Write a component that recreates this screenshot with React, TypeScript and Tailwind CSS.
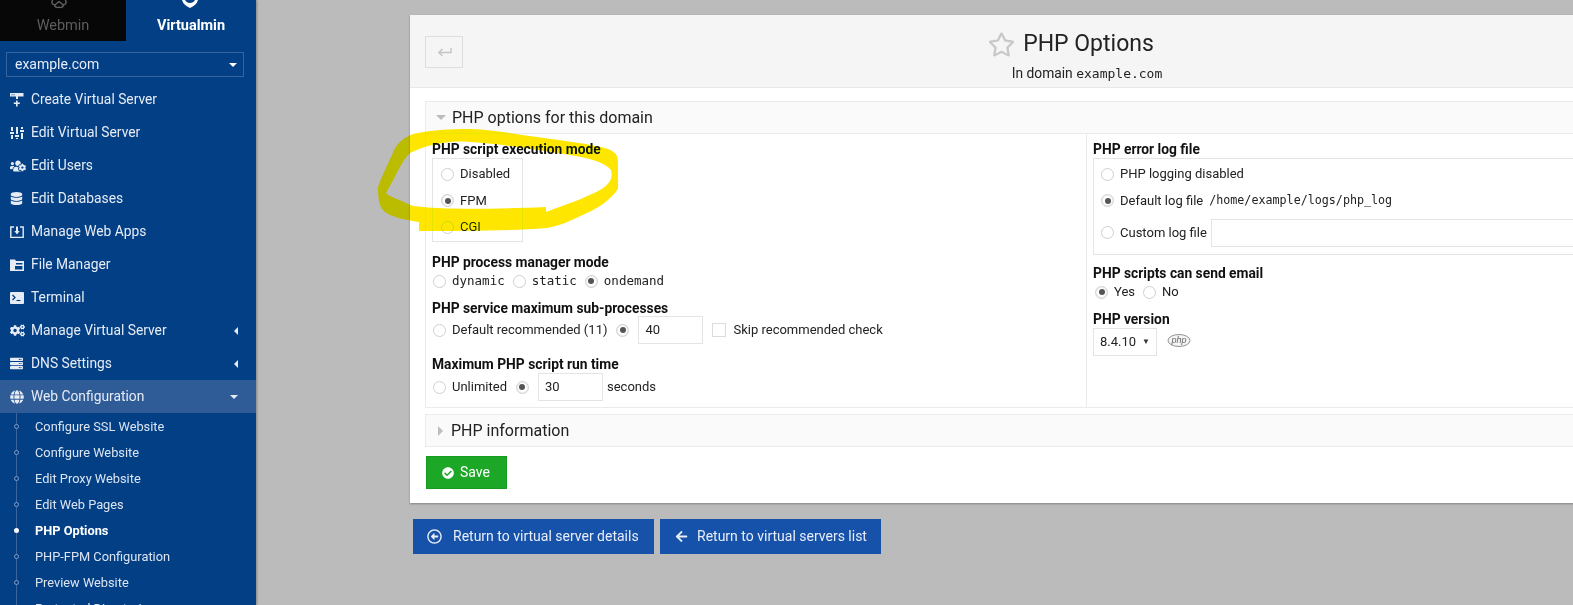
import { ReactNode } from 'react';
import {
  FaArrowLeft,
  FaCheckCircle,
  FaCogs,
  FaDatabase,
  FaGlobe,
  FaRegArrowAltCircleLeft,
  FaRegStar,
  FaServer,
  FaUsersCog,
} from 'react-icons/fa';

const mono = 'font-["DejaVu_Sans_Mono",monospace]';

function Sliders() {
  return (
    <svg viewBox="0 0 14 14" className="w-[14px] h-[14px]" fill="currentColor">
      <rect x="1" y="1" width="2" height="4" />
      <rect x="0" y="6" width="4" height="2" />
      <rect x="1" y="9" width="2" height="4" />
      <rect x="6" y="1" width="2" height="7" />
      <rect x="5" y="9" width="4" height="2" />
      <rect x="6" y="12" width="2" height="1" />
      <rect x="11" y="1" width="2" height="2" />
      <rect x="10" y="4" width="4" height="2" />
      <rect x="11" y="7" width="2" height="6" />
    </svg>
  );
}

function NewServer() {
  return (
    <svg viewBox="0 0 14 14" className="w-[14px] h-[14px]" fill="currentColor">
      <path
        fillRule="evenodd"
        d="M0 0h13.5v3.5H0zM1.5 1.2v1h1v-1zM3.5 1.2v1h1v-1zM6 3.5h2V6H6zM6 7.5h1.6v2h2.2V11H7.6v2.4H6V11H3.8V9.5H6z"
      />
    </svg>
  );
}

function BoxDown() {
  return (
    <svg viewBox="0 0 14 14" className="w-[14px] h-[14px]" fill="none" stroke="currentColor" strokeWidth="1.4">
      <path d="M4 2H.8v10.4h12.4V2H10" />
      <path d="M7 1.5v5" strokeWidth="2" />
      <path d="M4.4 6h5.2L7 9.5z" fill="currentColor" stroke="none" />
    </svg>
  );
}

function Folder() {
  return (
    <svg viewBox="0 0 14 14" className="w-[14px] h-[14px]" fill="currentColor">
      <path
        fillRule="evenodd"
        d="M0 1.5h5l1 1.5H14v10H0zM6 5v1.6h6.4V5zM5 8v3.6h7.4V8z"
      />
    </svg>
  );
}

function Term() {
  return (
    <svg viewBox="0 0 14 12" className="w-[14px] h-[12px]">
      <rect width="14" height="12" rx="1" fill="currentColor" />
      <path d="M2.5 3l2.5 2.5L2.5 8" fill="none" stroke="#033f85" strokeWidth="1.3" />
      <path d="M6.5 8.5h4" fill="none" stroke="#033f85" strokeWidth="1.1" />
    </svg>
  );
}

function BackArrow() {
  return (
    <svg viewBox="0 0 15 10" className="w-[15px] h-[10px]" fill="none" stroke="currentColor" strokeWidth="1.4">
      <path d="M14 1v4.5H2" />
      <path d="M5.5 2L1.8 5.5 5.5 9" />
    </svg>
  );
}

function MenuItem({ icon, label, arrow, active }: { icon: ReactNode; label: string; arrow?: 'left' | 'down'; active?: boolean }) {
  return (
    <div className={`h-[33px] flex items-center pl-[10px] pr-[18px] text-[13.8px] text-[#e6ecf5] ${active ? 'bg-[#2f5b97]' : ''}`}>
      <span className="w-[21px] flex justify-start">{icon}</span>
      <span className="flex-1">{label}</span>
      {arrow === 'left' && <span className="border-y-[4px] border-y-transparent border-r-[4px] border-r-[#e6ecf5]" />}
      {arrow === 'down' && <span className="border-x-[4px] border-x-transparent border-t-[4px] border-t-[#e6ecf5]" />}
    </div>
  );
}

function SubItem({ label, current }: { label: string; current?: boolean }) {
  return (
    <div className="relative h-[26px] flex items-center pl-[35px] text-[12.8px] text-[#dbe4f0]">
      {current ? (
        <span className="absolute left-[14px] top-[10px] w-[5px] h-[5px] rounded-full bg-white" />
      ) : (
        <span className="absolute left-[14px] top-[10px] w-[5px] h-[5px] rounded-full border border-[#7f9cc4] bg-[#033f85]" />
      )}
      <span className={current ? 'font-bold text-white' : ''}>{label}</span>
    </div>
  );
}

function Radio({ checked }: { checked?: boolean }) {
  return (
    <span className={`shrink-0 w-[13px] h-[13px] rounded-full border border-[#cfcfcf] flex items-center justify-center bg-white ${checked ? 'shadow-[inset_0_0_0_1px_#eee]' : ''}`}>
      {checked && <span className="w-[6px] h-[6px] rounded-full bg-[#555]" />}
    </span>
  );
}

function Label({ children }: { children: ReactNode }) {
  return <div className="font-bold text-[13.8px] leading-[16px] text-[#111]">{children}</div>;
}

function Field({ value, className }: { value?: string; className: string }) {
  return <div className={`h-[28px] border border-[#e4e4e4] flex items-center px-[6px] text-[13px] text-[#222] ${className}`}>{value}</div>;
}

function Marker() {
  return (
    <svg className="absolute left-0 top-0 pointer-events-none mix-blend-darken" width="1573" height="605">
      <path
        fill="#ffe600"
        fillRule="evenodd"
        d="M413 134C430 130 450 129 470 129C495 130 515 134 537 137C565 141 590 144 605 148C615 151 618 155 618 162L618 189C610 200 600 207 587 213C572 220 560 226 547 228C510 231 465 231 419 231L419 222C405 220 392 217 385 212C379 207 378 200 378 187C382 175 390 160 394 150C398 142 405 137 413 134ZM410 153C402 160 395 178 386 193C390 197 400 200 413 206C440 209 470 210 546 207L546 212C565 205 585 198 600 190C610 184 613 178 611 170C606 163 590 158 570 155C540 150 510 145 470 142C445 140 425 146 410 153Z"
      />
    </svg>
  );
}

export default function App() {
  return (
    <div className='relative w-[1573px] h-[605px] overflow-hidden flex bg-[#bbbbbb] font-["Roboto",sans-serif]'>
      <aside className="w-[256px] shrink-0 bg-[#033f85] shadow-[1px_0_2px_rgba(0,0,0,0.3)] overflow-hidden">
        <div className="flex h-[41px] text-[14.5px]">
          <div className="relative w-[126px] bg-[#070707] text-[#5e5e5e] flex justify-center items-end pb-[4px]">
            Webmin
            <svg viewBox="0 0 20 10" className="absolute left-[50px] top-0 w-[18px] h-[9px]" fill="none" stroke="#5e5e5e" strokeWidth="1.6">
              <path d="M3 0C1 3 3 6 6 5c2-1 3-3 4-3s2 2 4 3c3 1 5-2 3-5" />
              <path d="M5 5c0 3 3 4 5 3 2 1 5 0 5-3" />
            </svg>
          </div>
          <div className="relative flex-1 text-white font-bold flex justify-center items-end pb-[4px]">
            Virtualmin
            <svg viewBox="0 0 16 8" className="absolute left-[56px] top-0 w-[16px] h-[8px]" fill="#fff">
              <path d="M0 0h3c1 2 3 3 5 3s4-1 5-3h3c-1 4-4 6-8 8C4 6 1 4 0 0z" />
            </svg>
          </div>
        </div>
        <div className="ml-[6px] w-[238px] mt-[11px] h-[25px] border border-[#34639e] flex items-center justify-between pl-[8px] pr-[6px] text-[14px] text-[#e6ecf5]">
          example.com
          <span className="border-x-[4px] border-x-transparent border-t-[4px] border-t-white" />
        </div>
        <div className="mt-[6px]">
          <MenuItem icon={<NewServer />} label="Create Virtual Server" />
          <MenuItem icon={<Sliders />} label="Edit Virtual Server" />
          <MenuItem icon={<FaUsersCog size={16} />} label="Edit Users" />
          <MenuItem icon={<FaDatabase size={13} />} label="Edit Databases" />
          <MenuItem icon={<BoxDown />} label="Manage Web Apps" />
          <MenuItem icon={<Folder />} label="File Manager" />
          <MenuItem icon={<Term />} label="Terminal" />
          <MenuItem icon={<FaCogs size={15} />} label="Manage Virtual Server" arrow="left" />
          <MenuItem icon={<FaServer size={13} />} label="DNS Settings" arrow="left" />
          <MenuItem icon={<FaGlobe size={14} />} label="Web Configuration" arrow="down" active />
        </div>
        <div className="relative pt-[1px]">
          <span className="absolute left-[16px] top-0 bottom-0 w-px bg-[#3c659e]" />
          <SubItem label="Configure SSL Website" />
          <SubItem label="Configure Website" />
          <SubItem label="Edit Proxy Website" />
          <SubItem label="Edit Web Pages" />
          <SubItem label="PHP Options" current />
          <SubItem label="PHP-FPM Configuration" />
          <SubItem label="Preview Website" />
          <SubItem label="Protected Directories" />
        </div>
      </aside>

      <main className="pl-[154px] pt-[15px]">
        <section className="w-[1200px] bg-white shadow-[0_1px_2px_rgba(0,0,0,0.3)] pb-[14px]">
          <header className="relative h-[73px] bg-[#f5f5f5] border-b border-[#e8e8e8] flex flex-col items-center pt-[14px] pl-[154px]">
            <button className="absolute left-[15px] top-[21px] w-[38px] h-[32px] border border-[#dedede] flex items-center justify-center text-[#c4c4c4]">
              <BackArrow />
            </button>
            <div className="flex items-center gap-[8px] text-[23px] leading-[30px] text-[#222] -ml-[32px]">
              <FaRegStar size={27} className="text-[#c8c8c8]" />
              PHP Options
            </div>
            <div className="text-[13.8px] leading-[18px] mt-[5px] text-[#222]">
              In domain <span className={`${mono} text-[13px]`}>example.com</span>
            </div>
          </header>

          <div className="pl-[15px]">
            <div className="mt-[13px] h-[33px] bg-[#fafafa] border border-[#ebebeb] flex items-center pl-[10px] gap-[6px] text-[16px] text-[#222]">
              <span className="border-x-[5px] border-x-transparent border-t-[5px] border-t-[#bdbdbd]" />
              PHP options for this domain
            </div>
            <div className="flex h-[274px] border-x border-b border-[#ebebeb]">
              <div className="w-[661px] border-r border-[#ebebeb] pl-[6px] pt-[7px]">
                <Label>PHP script execution mode</Label>
                <div className="mt-[1px] w-[91px] h-[84px] border border-[#e4e4e4] pl-[8px] pt-[2px] text-[13px] text-[#222]">
                  <div className="h-[26px] flex items-center gap-[6px]"><Radio />Disabled</div>
                  <div className="h-[27px] flex items-center gap-[6px]"><Radio checked />FPM</div>
                  <div className="h-[26px] flex items-center gap-[6px]"><Radio />CGI</div>
                </div>
                <div className="mt-[12px]"><Label>PHP process manager mode</Label></div>
                <div className={`mt-[1px] h-[20px] flex items-center pl-[1px] text-[12.5px] text-[#222] ${mono}`}>
                  <Radio /><span className="ml-[6px]">dynamic</span>
                  <span className="ml-[8px]"><Radio /></span><span className="ml-[6px]">static</span>
                  <span className="ml-[8px]"><Radio checked /></span><span className="ml-[6px]">ondemand</span>
                </div>
                <div className="mt-[9px]"><Label>PHP service maximum sub-processes</Label></div>
                <div className="h-[28px] flex items-center pl-[1px] text-[13px] text-[#222]">
                  <Radio /><span className="ml-[6px]">Default recommended (11)</span>
                  <span className="ml-[9px]"><Radio checked /></span>
                  <Field value="40" className="ml-[9px] w-[65px]" />
                  <span className="ml-[9px] w-[14px] h-[14px] border border-[#dcdcdc]" />
                  <span className="ml-[7px]">Skip recommended check</span>
                </div>
                <div className="mt-[12px]"><Label>Maximum PHP script run time</Label></div>
                <div className="mt-[1px] h-[28px] flex items-center pl-[1px] text-[13px] text-[#222]">
                  <Radio /><span className="ml-[6px]">Unlimited</span>
                  <span className="ml-[9px]"><Radio checked /></span>
                  <Field value="30" className="ml-[9px] w-[65px]" />
                  <span className="ml-[4px]">seconds</span>
                </div>
              </div>
              <div className="flex-1 pl-[6px] pt-[7px]">
                <Label>PHP error log file</Label>
                <div className="mt-[1px] h-[97px] border border-[#e4e4e4] pl-[7px] pt-[2px] text-[13px] text-[#222]">
                  <div className="h-[26px] flex items-center gap-[6px]"><Radio />PHP logging disabled</div>
                  <div className="h-[27px] flex items-center gap-[6px]"><Radio checked />Default log file <span className={`${mono} text-[11.7px]`}>/home/example/logs/php_log</span></div>
                  <div className="h-[37px] flex items-center gap-[6px]"><Radio />Custom log file<Field className="-ml-[2px] flex-1" /></div>
                </div>
                <div className="mt-[10px]"><Label>PHP scripts can send email</Label></div>
                <div className="mt-[1px] h-[20px] flex items-center pl-[2px] text-[13px] text-[#222]">
                  <Radio checked /><span className="ml-[6px]">Yes</span>
                  <span className="ml-[8px]"><Radio /></span><span className="ml-[6px]">No</span>
                </div>
                <div className="mt-[9px]"><Label>PHP version</Label></div>
                <div className="mt-[1px] flex items-center">
                  <div className="w-[64px] h-[28px] border border-[#e4e4e4] flex items-center justify-between pl-[6px] pr-[6px] text-[13px] text-[#222]">
                    8.4.10<span className="text-[8px] text-[#333]">▼</span>
                  </div>
                  <svg viewBox="0 0 24 13" className="ml-[10px] -mt-[3px] w-[24px] h-[13px]">
                    <ellipse cx="12" cy="6.5" rx="11" ry="6" fill="#f4f4f4" stroke="#777" strokeWidth="0.8" />
                    <text x="12" y="9" textAnchor="middle" fontSize="9" fontStyle="italic" fill="#666" fontFamily="Liberation Sans, sans-serif">php</text>
                  </svg>
                </div>
              </div>
            </div>
            <div className="mt-[6px] h-[33px] bg-[#fafafa] border border-[#ebebeb] flex items-center pl-[12px] gap-[8px] text-[16px] text-[#222]">
              <span className="border-y-[5px] border-y-transparent border-l-[5px] border-l-[#bdbdbd]" />
              PHP information
            </div>
            <button className="mt-[9px] ml-[1px] w-[81px] h-[33px] bg-[#1ca727] border border-[#189a22] text-white text-[14px] flex items-center pl-[15px] gap-[6px]">
              <FaCheckCircle size={12} />
              Save
            </button>
          </div>
        </section>

        <div className="mt-[16px] ml-[3px] flex gap-[6px]">
          <button className="w-[241px] h-[35px] bg-[#1651aa] text-[#e8eef8] text-[14px] flex items-center pl-[14px] gap-[11px]">
            <FaRegArrowAltCircleLeft size={15} />
            Return to virtual server details
          </button>
          <button className="w-[221px] h-[35px] bg-[#1651aa] text-[#e8eef8] text-[14px] flex items-center pl-[15px] gap-[9px]">
            <FaArrowLeft size={13} />
            Return to virtual servers list
          </button>
        </div>
      </main>
      <Marker />
    </div>
  );
}
